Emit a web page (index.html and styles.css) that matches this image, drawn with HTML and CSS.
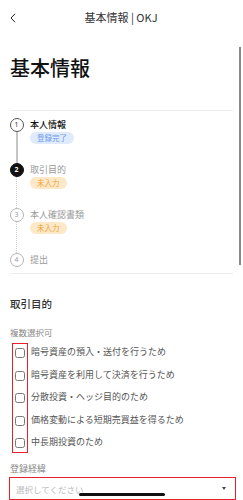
FILE: index.html
```html
<!DOCTYPE html>
<html>
<head>
  <title>基本情報 | OKJ</title>
  <link rel="stylesheet" href="styles.css">
</head>
<body>
  <div class="page">
    <div class="topbar">
      <svg class="back" width="6" height="10" viewBox="0 0 6 10"><path d="M5 0.8 L1 5 L5 9.2" fill="none" stroke="#222" stroke-width="1"/></svg>
      <div class="topbar-title">基本情報 | OKJ</div>
    </div>

    <h1>基本情報</h1>

    <div class="divider"></div>

    <div class="steps">
      <div class="step">
        <div class="rail">
          <div class="dot">1</div>
          <div class="line line-done"></div>
        </div>
        <div class="step-body">
          <div class="step-name step-name-done">本人情報</div>
          <span class="badge badge-blue">登録完了</span>
        </div>
      </div>
      <div class="step">
        <div class="rail">
          <div class="dot dot-current">2</div>
          <div class="line"></div>
        </div>
        <div class="step-body">
          <div class="step-name">取引目的</div>
          <span class="badge badge-orange">未入力</span>
        </div>
      </div>
      <div class="step">
        <div class="rail">
          <div class="dot">3</div>
          <div class="line"></div>
        </div>
        <div class="step-body">
          <div class="step-name">本人確認書類</div>
          <span class="badge badge-orange">未入力</span>
        </div>
      </div>
      <div class="step step-last">
        <div class="rail">
          <div class="dot">4</div>
        </div>
        <div class="step-body">
          <div class="step-name">提出</div>
        </div>
      </div>
    </div>

    <div class="divider"></div>

    <h2>取引目的</h2>
    <div class="hint">複数選択可</div>

    <div class="checks">
      <div class="check-col">
        <span class="box"></span>
        <span class="box"></span>
        <span class="box"></span>
        <span class="box"></span>
        <span class="box"></span>
      </div>
      <div class="label-col">
        <span>暗号資産の預入・送付を行うため</span>
        <span>暗号資産を利用して決済を行うため</span>
        <span>分散投資・ヘッジ目的のため</span>
        <span>価格変動による短期売買益を得るため</span>
        <span>中長期投資のため</span>
      </div>
    </div>

    <div class="hint hint-field">登録経緯</div>
    <div class="select">
      <span class="placeholder">選択してください</span>
      <span class="caret"></span>
    </div>

    <div class="scrollbar"></div>
    <div class="home-bar"></div>
  </div>
</body>
</html>
```

FILE: styles.css
```css
body {
  margin: 0;
  background: #fff;
  font-family: "Noto Sans CJK JP", "Noto Sans", sans-serif;
  color: #222;
}

.page {
  position: relative;
  width: 243px;
  height: 500px;
  overflow: hidden;
}

.topbar {
  height: 34px;
  display: flex;
  align-items: center;
  justify-content: center;
  position: relative;
}

.back {
  position: absolute;
  left: 10px;
  top: 13px;
}

.topbar-title {
  font-size: 11px;
  color: #333;
  margin-left: -1px;
}

h1 {
  margin: 22px 10px 0;
  font-size: 20px;
  font-weight: 500;
  line-height: 24px;
  color: #111;
}

.divider {
  height: 1px;
  background: #ececec;
  margin: 0 10px;
}

h1 + .divider {
  margin-top: 30px;
}

.steps {
  padding: 7px 10px 0 10px;
}

.step {
  display: flex;
  height: 45px;
}

.step-last {
  height: 20px;
}

.rail {
  width: 13px;
  display: flex;
  flex-direction: column;
  align-items: center;
}

.dot {
  width: 12px;
  height: 12px;
  border: 1px solid #b5b5b5;
  border-radius: 50%;
  font-size: 7px;
  line-height: 12px;
  text-align: center;
  color: #999;
  flex-shrink: 0;
  font-family: "Noto Sans", sans-serif;
}

.step:first-child .dot {
  border-color: #555;
  color: #333;
}

.dot-current {
  background: #111;
  border-color: #111;
  color: #fff;
  font-weight: bold;
}

.line {
  flex: 1;
  width: 0;
  border-left: 1px dotted #d0d0d0;
}

.line-done {
  border-left: 2px solid #c4c4c4;
}

.step-body {
  display: flex;
  flex-direction: column;
  align-items: flex-start;
  margin-left: 7px;
}

.step-name {
  font-size: 9px;
  line-height: 13px;
  color: #999;
}

.step-name-done {
  color: #111;
  font-weight: 500;
}

.badge {
  margin-top: 1px;
  padding: 0 7px;
  height: 12px;
  line-height: 12px;
  font-size: 7.5px;
  border-radius: 6px;
}

.badge-blue {
  background: #dfeafc;
  color: #6f9be6;
}

.badge-orange {
  background: #fde8c7;
  color: #f0a43a;
}

h2 {
  margin: 23px 10px 0;
  font-size: 10.5px;
  font-weight: 500;
  line-height: 14px;
  color: #333;
}

.hint {
  margin: 15px 10px 0;
  font-size: 8.5px;
  line-height: 12px;
  color: #888;
}

.checks {
  display: flex;
  margin: 5px 0 0 12px;
}

.check-col {
  display: flex;
  flex-direction: column;
  align-items: center;
  width: 14px;
  padding: 4px 0 4px;
  gap: 12.5px;
  border: 1px solid #e8202a;
}

.box {
  width: 8px;
  height: 8px;
  border: 1px solid #777;
  border-radius: 2.5px;
}

.label-col {
  display: flex;
  flex-direction: column;
  margin-left: 3px;
  padding-top: 2px;
  gap: 9.5px;
  font-size: 9px;
  line-height: 13px;
  color: #555;
}

.hint-field {
  margin-top: 10px;
  font-size: 9px;
}

.select {
  display: flex;
  align-items: center;
  justify-content: space-between;
  margin: 2px 7px 0 9px;
  height: 21px;
  padding: 0 9px 0 6px;
  border: 1px solid #e8202a;
}

.placeholder {
  font-size: 8.5px;
  color: #bbb;
}

.caret {
  width: 0;
  height: 0;
  border-left: 2.5px solid transparent;
  border-right: 2.5px solid transparent;
  border-top: 3px solid #444;
}

.scrollbar {
  position: absolute;
  left: 239px;
  top: 47px;
  width: 2px;
  height: 218px;
  background: #8a8a8a;
}

.home-bar {
  position: absolute;
  left: 79px;
  top: 493px;
  width: 86px;
  height: 3px;
  border-radius: 2px;
  background: #111;
}
```
